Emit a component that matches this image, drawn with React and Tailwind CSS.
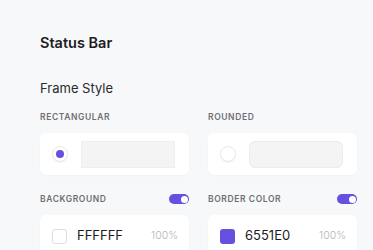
import React from 'react'

const Label = ({ children }) => (
  <div className="text-[8.5px] leading-3 font-semibold tracking-[0.07em] text-[#6f6f73] uppercase">
    {children}
  </div>
)

const Toggle = () => (
  <div className="w-5 h-2.5 rounded-full bg-[#6551E0] flex items-center justify-end pr-[1.5px]">
    <div className="w-[7px] h-[7px] rounded-full bg-white" />
  </div>
)

const FrameOption = ({ label, selected, rounded }) => (
  <div>
    <Label>{label}</Label>
    <div className="mt-[10px] h-[42px] bg-white rounded-md shadow-[0_1px_2px_rgba(0,0,0,0.03)] flex items-center pl-3 gap-[13px]">
      <div className="w-4 h-4 rounded-full bg-white border border-[#e8e8ea] shadow-[0_1px_1px_rgba(0,0,0,0.04)] flex items-center justify-center">
        {selected && <div className="w-2 h-2 rounded-full bg-[#6551E0]" />}
      </div>
      <div
        className={
          rounded
            ? 'w-[94px] h-[27px] bg-[#f3f4f3] border border-[#ececec] rounded-md'
            : 'w-[94px] h-[27px] bg-[#f3f4f3] border border-[#eeeeee]'
        }
      />
    </div>
  </div>
)

const ColorField = ({ label, hex, swatch }) => (
  <div>
    <div className="flex items-center justify-between h-3">
      <Label>{label}</Label>
      <Toggle />
    </div>
    <div className="mt-[10px] h-[42px] bg-white rounded-md shadow-[0_1px_2px_rgba(0,0,0,0.03)] flex items-center pl-3 pr-[11px]">
      <div className={swatch} />
      <span className="ml-[10px] text-[13px] text-[#1d1d1f]">{hex}</span>
      <span className="ml-auto text-[10.5px] font-light text-[#b4b4b8]">100%</span>
    </div>
  </div>
)

export default function App() {
  return (
    <div
      className="min-h-screen bg-[#f7f8fa] pl-10 pr-4 pt-[33px]"
      style={{ fontFamily: 'Inter, "Noto Sans", sans-serif' }}
    >
      <h1 className="text-[14.5px] leading-5 font-semibold text-[#1d1d1f]">Status Bar</h1>
      <p className="mt-[26px] text-[13px] leading-[18px] text-[#2a2a2d]">Frame Style</p>
      <div className="mt-[14px] grid grid-cols-2 gap-x-[19px]">
        <FrameOption label="Rectangular" selected />
        <FrameOption label="Rounded" rounded />
      </div>
      <div className="mt-[18px] grid grid-cols-2 gap-x-[19px]">
        <ColorField
          label="Background"
          hex="FFFFFF"
          swatch="w-[15px] h-[15px] rounded-[3px] border border-[#dedee0] bg-white"
        />
        <ColorField
          label="Border Color"
          hex="6551E0"
          swatch="w-[15px] h-[15px] rounded-[3px] bg-[#6551E0]"
        />
      </div>
    </div>
  )
}
